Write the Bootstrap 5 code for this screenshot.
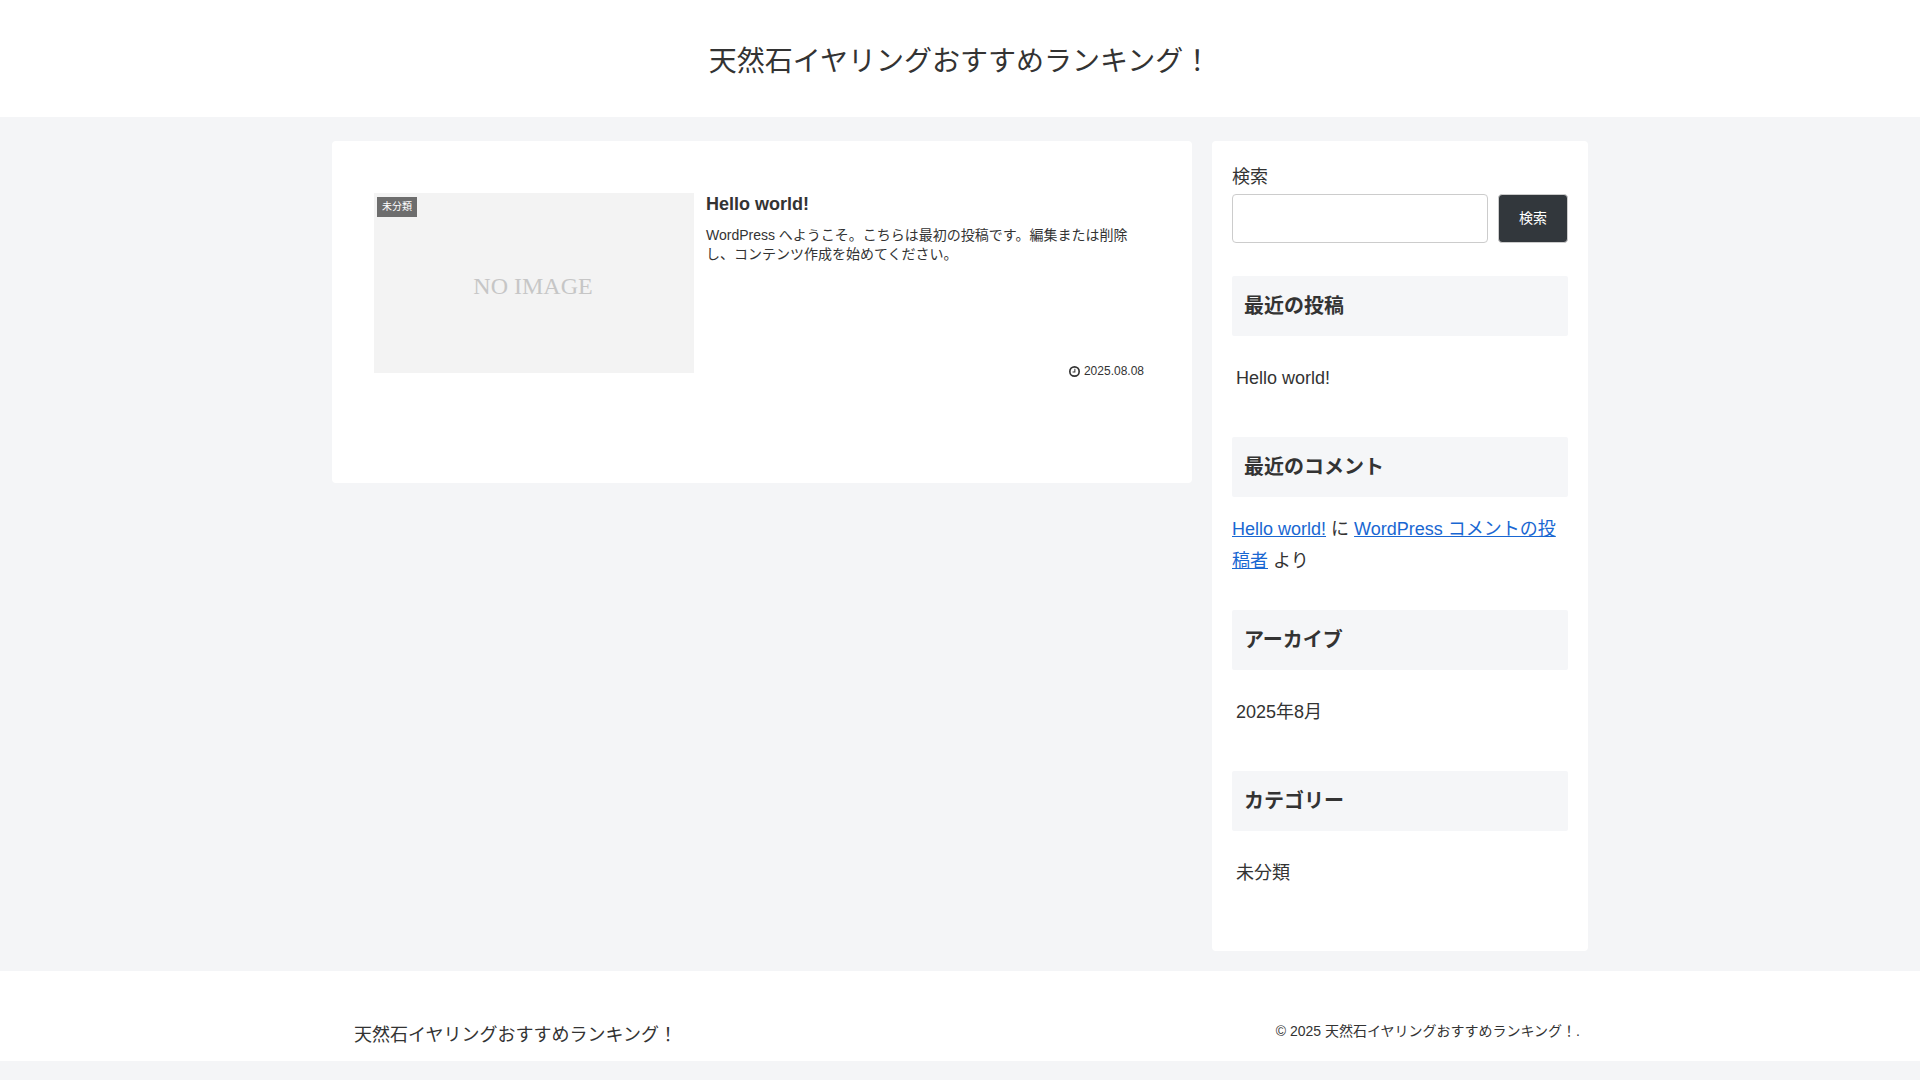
<!DOCTYPE html>
<html lang="ja">
<head>
<meta charset="utf-8">
<meta name="viewport" content="width=device-width, initial-scale=1">
<title>天然石イヤリングおすすめランキング！</title>
<link href="https://cdn.jsdelivr.net/npm/bootstrap@5.3.0/dist/css/bootstrap.min.css" rel="stylesheet">
<style>
  body {
    font-family: "Liberation Sans", "Noto Sans CJK JP", sans-serif;
    font-size: 18px;
    line-height: 32px;
    color: #333;
    background: #f4f5f7;
  }
  .site-wrap { max-width: 1256px; }
  .site-name { font-size: 28px; line-height: 50px; padding: 37px 0 30px; }
  .content-area { padding-top: 24px; padding-bottom: 20px; gap: 20px; }
  .panel { background: #fff; border-radius: 4px; }
  .main-panel { padding: 52px 42px 110px; }
  .side-panel { padding: 20px 20px 19px; }
  .thumb { width: 320px; height: 180px; background: #f3f3f3; }
  .no-image { font-family: "Liberation Serif", serif; font-size: 24px; color: #c6c6c6; padding: 6px 2px 0 0; }
  .cat-label {
    top: 4px; left: 3px; padding: 0 5px;
    font-size: 10px; line-height: 20px;
    color: #fff; background: rgba(51, 51, 51, .7);
  }
  .entry-body { padding: 0 6px 0 12px; }
  .entry-title { font-size: 18px; line-height: 22px; margin-bottom: 11px; }
  .entry-text { font-size: 14px; line-height: 19px; margin-right: -6px; }
  .entry-date { font-size: 12px; line-height: 16px; margin-bottom: -6px; gap: 4px; }
  .search-label { line-height: 33px; }
  .search-row { gap: 10px; }
  .search-field, .search-btn { height: 49px; border: 1px solid #ccc; border-radius: 4px; }
  .search-btn { font-size: 14px; padding: 0 20px; color: #fff; background: #32373c; }
  .search-btn:hover { color: #fff; background: #444a50; }
  .widget { margin-bottom: 33px; }
  .widget-title {
    font-size: 20px; line-height: 34px; padding: 13px 12px; margin-bottom: 16px;
    background: #f5f6f8; border-radius: 2px;
  }
  .widget-list a { display: block; padding: 10px 4px; }
  .comment-item a { color: #1967d2; }
  .site-footer { padding: 44px 8px 10px 22px; }
  .footer-name { padding-top: 4px; }
  .copyright { font-size: 14px; line-height: 32px; }
  @media (min-width: 992px) {
    .side-panel { width: 376px; }
  }
</style>
</head>
<body>
<header class="bg-white text-center">
  <h1 class="site-name fw-normal m-0"><a class="text-reset text-decoration-none" href="#">天然石イヤリングおすすめランキング！</a></h1>
</header>

<div class="site-wrap container-fluid px-0 content-area d-flex flex-column flex-lg-row align-items-lg-start">
  <main class="panel main-panel flex-grow-1">
    <article>
      <a class="d-flex flex-column flex-md-row text-reset text-decoration-none" href="#">
        <div class="thumb position-relative flex-shrink-0 d-flex align-items-center justify-content-center">
          <span class="no-image">NO IMAGE</span>
          <span class="cat-label position-absolute">未分類</span>
        </div>
        <div class="entry-body flex-grow-1 d-flex flex-column">
          <h2 class="entry-title fw-bold">Hello world!</h2>
          <p class="entry-text mb-0">WordPress へようこそ。こちらは最初の投稿です。編集または削除し、コンテンツ作成を始めてください。</p>
          <div class="entry-date mt-auto d-flex align-items-center justify-content-end">
            <svg width="11" height="11" viewBox="0 0 12 12" fill="none" stroke="#333" aria-hidden="true">
              <circle cx="6" cy="6" r="5.1" stroke-width="1.8"/>
              <path d="M6.4 3v3.5H3.9" stroke-width="1.1"/>
            </svg>
            <time datetime="2025-08-08">2025.08.08</time>
          </div>
        </div>
      </a>
    </article>
  </main>

  <aside class="panel side-panel flex-shrink-0">
    <form class="widget" role="search">
      <label class="search-label d-block" for="search">検索</label>
      <div class="search-row d-flex">
        <input class="search-field form-control shadow-none" type="search" id="search">
        <button class="search-btn btn flex-shrink-0" type="button">検索</button>
      </div>
    </form>
    <section class="widget">
      <h2 class="widget-title fw-bold">最近の投稿</h2>
      <ul class="widget-list list-unstyled mb-0"><li><a class="text-reset text-decoration-none" href="#">Hello world!</a></li></ul>
    </section>
    <section class="widget">
      <h2 class="widget-title fw-bold">最近のコメント</h2>
      <ol class="list-unstyled mb-0"><li class="comment-item"><a href="#">Hello world!</a> に <a href="#">WordPress コメントの投稿者</a> より</li></ol>
    </section>
    <section class="widget">
      <h2 class="widget-title fw-bold">アーカイブ</h2>
      <ul class="widget-list list-unstyled mb-0"><li><a class="text-reset text-decoration-none" href="#">2025年8月</a></li></ul>
    </section>
    <section class="widget">
      <h2 class="widget-title fw-bold">カテゴリー</h2>
      <ul class="widget-list list-unstyled mb-0"><li><a class="text-reset text-decoration-none" href="#">未分類</a></li></ul>
    </section>
  </aside>
</div>

<footer class="bg-white">
  <div class="site-wrap site-footer container-fluid d-flex flex-wrap justify-content-between align-items-start">
    <a class="footer-name text-reset text-decoration-none" href="#">天然石イヤリングおすすめランキング！</a>
    <small class="copyright">© 2025 天然石イヤリングおすすめランキング！.</small>
  </div>
</footer>
<script src="https://cdn.jsdelivr.net/npm/bootstrap@5.3.0/dist/js/bootstrap.bundle.min.js"></script>
</body>
</html>
